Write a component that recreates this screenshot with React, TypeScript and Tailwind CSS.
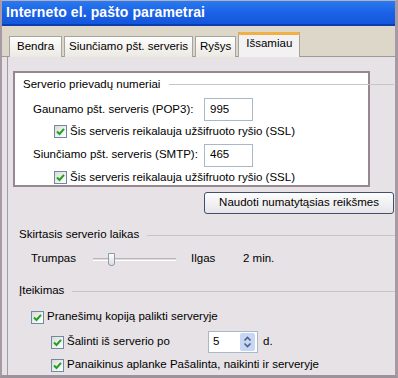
import React from "react";

const font = { fontFamily: "'Liberation Sans', 'DejaVu Sans', sans-serif" };

function Check({ className = "" }: { className?: string }) {
  return (
    <span className={"inline-flex h-[13px] w-[13px] shrink-0 items-center justify-center border border-[#6f8aa8] bg-gradient-to-br from-[#dcdcd6] to-[#ffffff] " + className}>
      <svg width="9" height="9" viewBox="0 0 9 9">
        <path d="M1 4.5 L3.5 7 L8 1.8" fill="none" stroke="#21a121" strokeWidth="2" />
      </svg>
    </span>
  );
}

function GroupTitle({ text, className = "" }: { text: string; className?: string }) {
  return (
    <div className={"flex items-center " + className}>
      <span className="text-[11.5px] text-black">{text}</span>
      <div className="ml-[8px] h-px flex-1 bg-[#c9c4c8]" />
    </div>
  );
}

export default function App() {
  return (
    <div className="relative h-[378px] w-[398px] overflow-hidden bg-[#e6e2e6] text-[11.5px] text-black" style={font}>
      <div className="flex h-full flex-col border-l-2 border-r-[3px] border-t border-b-[3px] border-l-[#a79aa4] border-r-[#a79aa4] border-t-[#b7b0b8] border-b-[#9d929c]">
        {/* title bar */}
        <div className="flex h-[25px] shrink-0 items-center border-b-2 border-b-[#0a3db0] bg-gradient-to-b from-[#2a7af0] via-[#1b62e6] to-[#1556db] pl-[4px]">
          <span className="text-[14px] font-bold tracking-[0.1px] text-white">Interneto el. pašto parametrai</span>
        </div>
        {/* tab strip */}
        <div className="flex h-[31px] shrink-0 items-end border-b border-b-[#9c989c] bg-[#dcd7c8] pl-[7px]">
          <div className="mb-[-1px] flex h-[21px] items-center border border-b-0 border-[#a6a4a0] bg-gradient-to-b from-[#fdfdfc] to-[#ece9e2] px-[7px]">Bendra</div>
          <div className="mb-[-1px] ml-[2px] flex h-[21px] items-center border border-b-0 border-[#a6a4a0] bg-gradient-to-b from-[#fdfdfc] to-[#ece9e2] px-[4px]">Siunčiamo pšt. serveris</div>
          <div className="mb-[-1px] ml-[2px] flex h-[21px] items-center border border-b-0 border-[#a6a4a0] bg-gradient-to-b from-[#fdfdfc] to-[#ece9e2] px-[4px]">Ryšys</div>
          <div className="relative mb-[-1px] ml-[2px] flex h-[25px] w-[62px] items-center justify-center border border-b-0 border-[#a6a4a0] bg-[#f3f1f2] pb-[3px]">
            <div className="absolute left-[-1px] right-[-1px] top-[-1px] h-[3px] rounded-t-[2px] bg-[#f0b048]" />
            Išsamiau
          </div>
        </div>
        {/* panel */}
        <div className="ml-[5px] flex flex-1 flex-col border-l border-l-[#a09ca0] pl-[5px]">
          <div className="mt-[14px] flex h-[116px] w-[357px] flex-col border-2 border-[#968790] bg-white pl-[8px]">
            <div className="mt-[3px] flex items-center">
              <span>Serverio prievadų numeriai</span>
              <div className="ml-[9px] mr-[-26px] h-px flex-1 bg-[#c9c4c8]" />
            </div>
            <div className="mt-[5px] flex h-[23px] items-center pl-[10px]">
              <span className="w-[171px]">Gaunamo pšt. serveris (POP3):</span>
              <div className="flex h-[23px] w-[49px] items-center border border-[#a9b8c8] pl-[5px]">995</div>
            </div>
            <div className="mt-[2px] flex h-[20px] items-center pl-[31px]">
              <Check />
              <span className="ml-[3px]">Šis serveris reikalauja užšifruoto ryšio (SSL)</span>
            </div>
            <div className="mt-[3px] flex h-[23px] items-center pl-[10px]">
              <span className="w-[171px]">Siunčiamo pšt. serveris (SMTP):</span>
              <div className="flex h-[23px] w-[49px] items-center border border-[#a9b8c8] pl-[5px]">465</div>
            </div>
            <div className="mt-[2px] flex h-[20px] items-center pl-[31px]">
              <Check />
              <span className="ml-[3px]">Šis serveris reikalauja užšifruoto ryšio (SSL)</span>
            </div>
          </div>
          <div className="mt-[5px] flex justify-end pr-[1px]">
            <div className="flex h-[22px] w-[190px] items-center justify-center rounded-[3px] border border-[#40506c] bg-gradient-to-b from-[#fdfdfd] to-[#e6e4e8]">
              Naudoti numatytąsias reikšmes
            </div>
          </div>
          <GroupTitle text="Skirtasis serverio laikas" className="mt-[14px] h-[14px] pl-[6px]" />
          <div className="mt-[9px] flex h-[16px] items-center pl-[18px]">
            <span className="w-[62px]">Trumpas</span>
            <div className="relative h-[12px] w-[83px]">
              <div className="absolute left-0 right-0 top-[5px] h-[3px] border-t border-b border-t-[#b8b4b8] border-b-[#ffffff] bg-[#e0dce0]" />
              <div className="absolute left-[15px] top-0 h-[13px] w-[7px] rounded-b-[3px] border border-[#8a9ab0] bg-gradient-to-b from-[#ffffff] to-[#dcdce4]" />
            </div>
            <span className="ml-[15px] w-[52px]">Ilgas</span>
            <span>2 min.</span>
          </div>
          <GroupTitle text="Įteikimas" className="mt-[17px] h-[14px] pl-[6px]" />
          <div className="mt-[12px] flex h-[14px] items-center pl-[18px]">
            <Check />
            <span className="ml-[3px]">Pranešimų kopiją palikti serveryje</span>
          </div>
          <div className="mt-[7px] flex h-[22px] items-center pl-[38px]">
            <Check />
            <span className="ml-[3px] w-[141px]">Šalinti iš serverio po</span>
            <div className="flex h-[22px] w-[50px] items-center border border-[#a9b8c8] bg-white pl-[4px]">
              <span className="flex-1">5</span>
              <div className="mr-[2px] flex h-[18px] w-[15px] flex-col items-center justify-center rounded-[2px] bg-[#c6d6f4]">
                <svg width="9" height="14" viewBox="0 0 9 14">
                  <path d="M1.5 5.5 L4.5 2.5 L7.5 5.5" fill="none" stroke="#4d6185" strokeWidth="1.6" />
                  <path d="M1.5 8.5 L4.5 11.5 L7.5 8.5" fill="none" stroke="#4d6185" strokeWidth="1.6" />
                </svg>
              </div>
            </div>
            <span className="ml-[5px]">d.</span>
          </div>
          <div className="mt-[5px] flex h-[14px] items-center pl-[38px]">
            <Check />
            <span className="ml-[3px]">Panaikinus aplanke Pašalinta, naikinti ir serveryje</span>
          </div>
        </div>
      </div>
    </div>
  );
}
